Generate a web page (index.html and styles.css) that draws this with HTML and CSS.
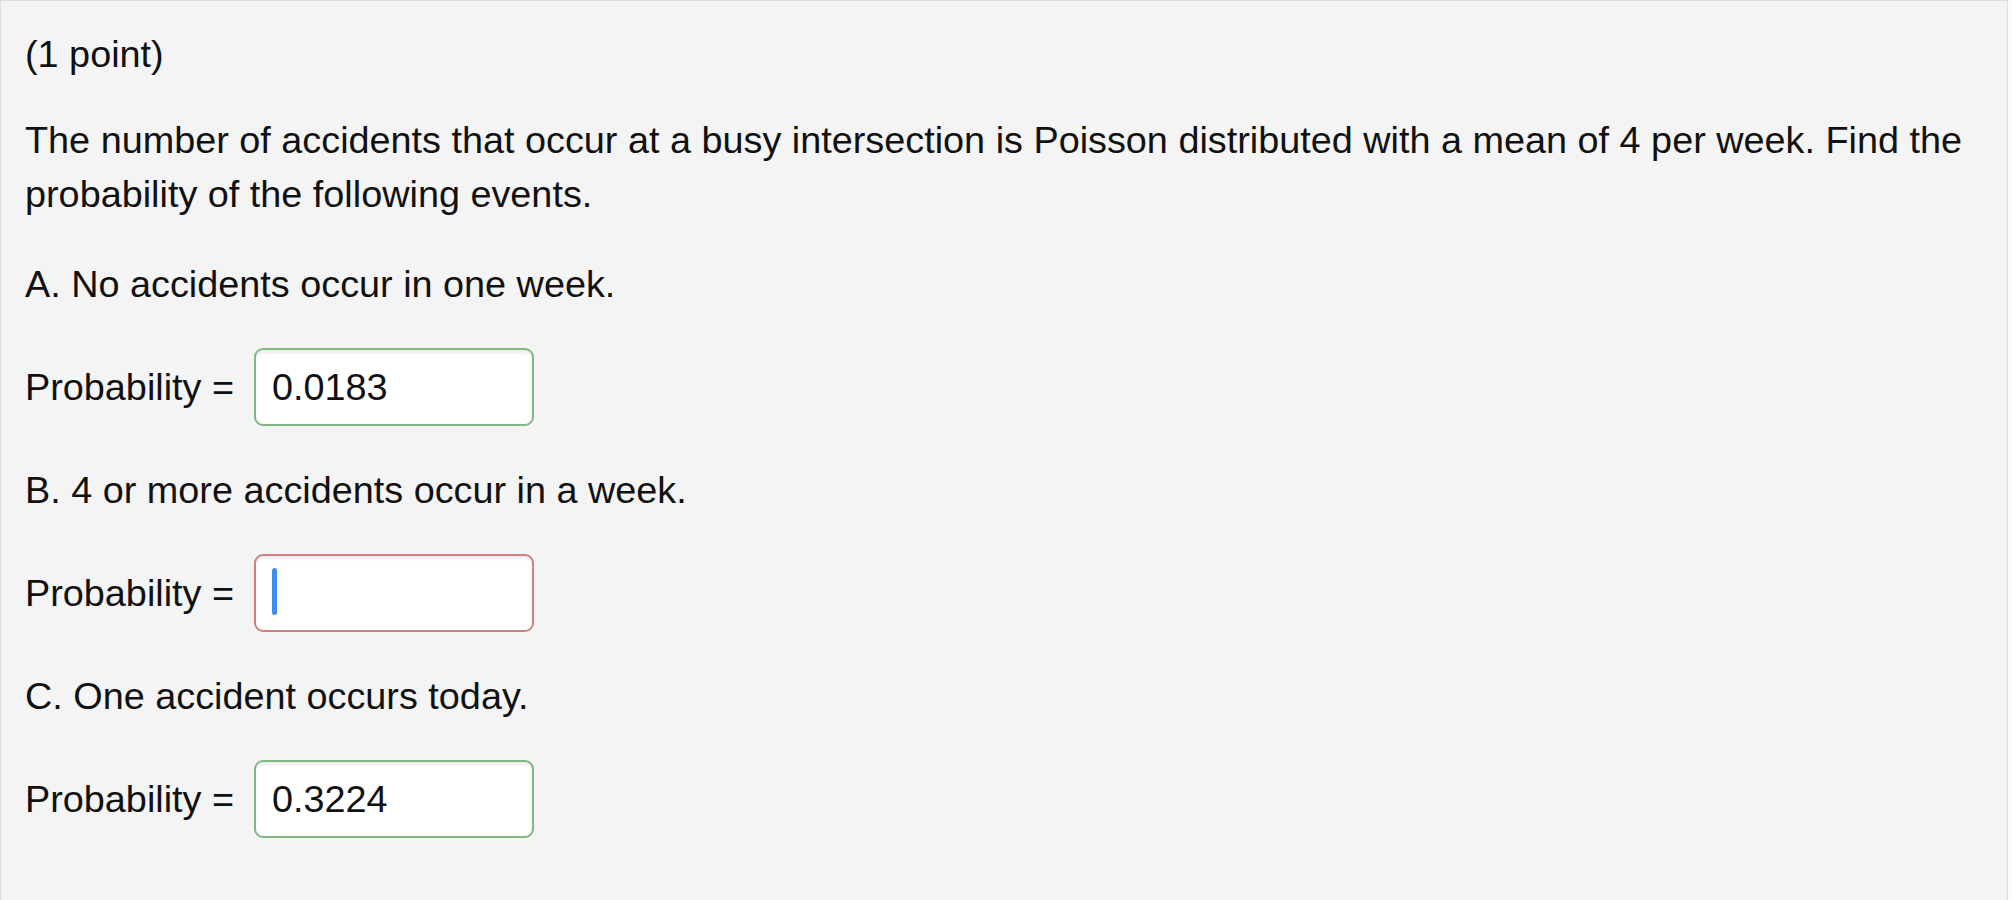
FILE: index.html
```html
<!DOCTYPE html>
<html lang="en">
<head>
<meta charset="utf-8">
<title>Problem</title>
<link rel="stylesheet" href="styles.css">
</head>
<body>
<div class="panel">
  <p class="points">(1 point)</p>
  <p class="intro">The number of accidents that occur at a busy intersection is Poisson distributed with a mean of 4 per week. Find the probability of the following events.</p>

  <p class="question">A. No accidents occur in one week.</p>
  <div class="row">
    <span class="label">Probability =</span>
    <span class="field"><input class="answer correct" type="text" value="0.0183"></span>
  </div>

  <p class="question">B. 4 or more accidents occur in a week.</p>
  <div class="row">
    <span class="label">Probability =</span>
    <span class="field"><input class="answer wrong" type="text" value=""><span class="caret"></span></span>
  </div>

  <p class="question">C. One accident occurs today.</p>
  <div class="row">
    <span class="label">Probability =</span>
    <span class="field"><input class="answer correct" type="text" value="0.3224"></span>
  </div>
</div>
</body>
</html>
```
FILE: styles.css
```css
html, body {
  margin: 0;
  padding: 0;
  background: #fbfbfb;
}
body {
  width: 2012px;
  height: 900px;
  overflow: hidden;
  font-family: "Liberation Sans", Arial, Helvetica, sans-serif;
  font-size: 37.8px;
  line-height: 54px;
  color: #111;
}
.panel {
  box-sizing: border-box;
  width: 2008px;
  height: 900px;
  background: #f4f4f4;
  border: 1px solid #dedede;
  border-bottom: none;
  padding: 26px 0 0 24px;
  display: flex;
  flex-direction: column;
  align-items: flex-start;
}
p {
  margin: 0;
}
.points {
  margin-bottom: 32px;
}
.intro {
  width: 1960px;
  margin-bottom: 36px;
}
.question {
  margin-bottom: 37px;
}
.row {
  display: flex;
  align-items: center;
  margin-bottom: 37px;
}
.label {
  width: 209px;
  margin-right: 20px;
  white-space: nowrap;
}
.field {
  position: relative;
  display: block;
}
.answer {
  box-sizing: border-box;
  display: block;
  width: 280px;
  height: 78px;
  margin: 0;
  padding: 0 0 0 16px;
  border: 2px solid #80b880;
  border-radius: 9px;
  background: #fff;
  box-shadow: inset 0 3px 3px rgba(0, 0, 0, 0.07);
  font-family: "Liberation Sans", Arial, Helvetica, sans-serif;
  font-size: 37.8px;
  color: #111;
  outline: none;
}
.answer.wrong {
  border-color: #cf8080;
}
.caret {
  position: absolute;
  left: 18px;
  top: 14px;
  width: 5px;
  height: 47px;
  border-radius: 3px;
  background: #3d8cf4;
}
```
